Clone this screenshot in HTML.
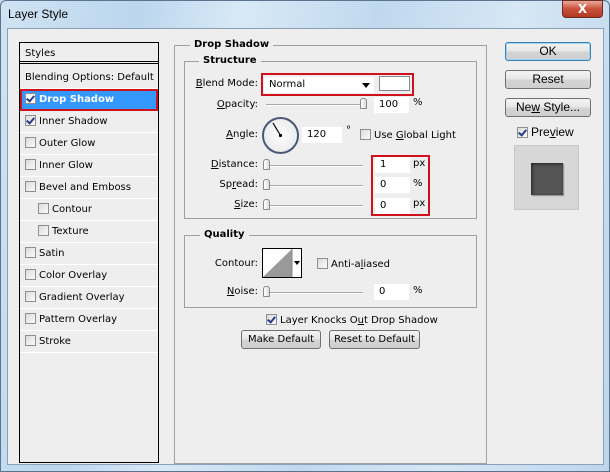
<!DOCTYPE html>
<html><head><meta charset="utf-8"><style>
*{box-sizing:border-box;margin:0;padding:0}
body{width:610px;height:472px;overflow:hidden;font-family:Tahoma,"DejaVu Sans","Liberation Sans",sans-serif;font-size:10px;color:#000;position:relative;background:#c4dcef}
.a{position:absolute}
.frame{left:0;top:0;width:610px;height:472px;background:linear-gradient(100deg,#cfe3f3 0%,#bcd6ee 20%,#d8e9f6 35%,#c0d8ee 55%,#d6e7f5 75%,#bed6ec 100%);border:1px solid #5b7590;border-radius:6px 6px 0 0}
.content{left:7px;top:28px;width:597px;height:437px;background:#eeeeee;border:1px solid #8aa0b4}
.title{left:8px;top:7px;font-family:"Liberation Sans",sans-serif;font-size:12px;color:#000}
.close{left:562px;top:0;width:41px;height:18px;border-radius:0 0 4px 4px;background:linear-gradient(#e9a99a,#c9503a 50%,#b23a22);border:1px solid #6f2a1e;color:#fff;font-weight:bold;font-size:12px;text-align:center;line-height:16px}
.list{left:19px;top:42px;width:140px;height:421px;border:1px solid #000;background:#eeeeee}
.row{position:absolute;left:0;width:138px;height:22px;border-bottom:1px solid #fff;line-height:21px;padding-left:5px;font-size:10px;white-space:nowrap}
.cb{display:inline-block;width:11px;height:11px;border:1px solid #8f8f8f;background:linear-gradient(135deg,#dcdcdc,#fafafa);vertical-align:-2px;margin-right:3px;position:relative}
.cb.on::after{content:"";position:absolute;left:2px;top:0px;width:3px;height:6px;border:solid #2a3d8c;border-width:0 2px 2px 0;transform:rotate(40deg)}
.grp{border:1px solid #a0a0a0}
.lg{position:absolute;background:#eeeeee;font-weight:bold;font-size:10px;padding:0 4px}
.lbl{position:absolute;text-align:right;font-size:10px}
.in{position:absolute;background:#fff;height:16px;font-size:10px;line-height:16px;padding-left:5px}
.track{position:absolute;height:2px;border-top:1px solid #a8a8a8;border-bottom:1px solid #fff}
.thumb{position:absolute;width:7px;height:11px;border:1px solid #888;border-radius:3px 3px 1px 1px;background:linear-gradient(90deg,#fff,#ddd)}
.red{position:absolute;border:2px solid #d0101c}
.btn{position:absolute;height:19px;border:1px solid #707070;border-radius:3px;background:linear-gradient(#f4f4f4 0%,#e6e6e6 50%,#d4d4d4 51%,#cfcfcf 100%);text-align:center;line-height:17px;font-size:12px;font-family:"Liberation Sans",sans-serif}
.sbtn{font-size:10px;font-family:Tahoma,"DejaVu Sans",sans-serif}
u{text-decoration:underline}
</style></head><body>
<div class="a frame"></div>
<div class="a title">Layer Style</div>
<div class="a close">X</div>
<div class="a content"></div>

<div class="a list">
  <div class="row" style="top:0;height:21px;border-bottom:3px double #000">Styles</div>
  <div class="row" style="top:24px">Blending Options: Default</div>
  <div class="row" style="top:46px;background:#3399ff;color:#fff;font-weight:bold;border:2px solid #d0101c;padding-left:3px;line-height:18px"><span class="cb on" style="background:#fff"></span>Drop Shadow</div>
  <div class="row" style="top:68px"><span class="cb on"></span>Inner Shadow</div>
  <div class="row" style="top:90px"><span class="cb"></span>Outer Glow</div>
  <div class="row" style="top:112px"><span class="cb"></span>Inner Glow</div>
  <div class="row" style="top:134px"><span class="cb"></span>Bevel and Emboss</div>
  <div class="row" style="top:156px;padding-left:18px"><span class="cb"></span>Contour</div>
  <div class="row" style="top:178px;padding-left:18px"><span class="cb"></span>Texture</div>
  <div class="row" style="top:200px"><span class="cb"></span>Satin</div>
  <div class="row" style="top:222px"><span class="cb"></span>Color Overlay</div>
  <div class="row" style="top:244px"><span class="cb"></span>Gradient Overlay</div>
  <div class="row" style="top:266px"><span class="cb"></span>Pattern Overlay</div>
  <div class="row" style="top:288px"><span class="cb"></span>Stroke</div>
</div>

<div class="a grp" style="left:174px;top:45px;width:313px;height:419px"></div>
<div class="lg" style="left:190px;top:39px">Drop Shadow</div>
<div class="a grp" style="left:184px;top:61px;width:293px;height:158px"></div>
<div class="lg" style="left:199px;top:55px">Structure</div>

<div class="lbl" style="left:190px;top:78px;width:68px"><u>B</u>lend Mode:</div>
<div class="in" style="left:264px;top:77px;width:110px">Normal<span style="position:absolute;right:4px;top:6px;border:4px solid transparent;border-top:5px solid #000;border-bottom:0"></span></div>
<div class="a" style="left:379px;top:76px;width:31px;height:15px;border:1px solid #888;background:#fff"></div>
<div class="red" style="left:261px;top:73px;width:153px;height:23px"></div>

<div class="lbl" style="left:190px;top:99px;width:68px"><u>O</u>pacity:</div>
<div class="track" style="left:266px;top:104px;width:100px"></div>
<div class="thumb" style="left:360px;top:98px"></div>
<div class="in" style="left:374px;top:97px;width:35px">100</div>
<div class="a" style="left:413px;top:97px">%</div>

<div class="lbl" style="left:190px;top:129px;width:68px"><u>A</u>ngle:</div>
<div class="a" style="left:262px;top:117px;width:37px;height:37px;border-radius:50%;border:2px solid #4a5678;background:radial-gradient(#fff,#e4e4e4)"></div>
<svg class="a" style="left:262px;top:117px" width="37" height="37"><line x1="18.5" y1="18.5" x2="11" y2="6" stroke="#000" stroke-width="1.2"/><circle cx="18.5" cy="18.5" r="1.6"/></svg>
<div class="in" style="left:302px;top:127px;width:40px">120</div>
<div class="a" style="left:346px;top:125px">°</div>
<div class="a" style="left:360px;top:129px"><span class="cb"></span>Use <u>G</u>lobal Light</div>

<div class="lbl" style="left:190px;top:159px;width:68px"><u>D</u>istance:</div>
<div class="track" style="left:266px;top:165px;width:97px"></div>
<div class="thumb" style="left:263px;top:159px"></div>
<div class="in" style="left:375px;top:157px;width:35px">1</div>
<div class="a" style="left:413px;top:158px">px</div>
<div class="lbl" style="left:190px;top:179px;width:68px">Sp<u>r</u>ead:</div>
<div class="track" style="left:266px;top:185px;width:97px"></div>
<div class="thumb" style="left:263px;top:179px"></div>
<div class="in" style="left:375px;top:177px;width:35px">0</div>
<div class="a" style="left:413px;top:178px">%</div>
<div class="lbl" style="left:190px;top:199px;width:68px"><u>S</u>ize:</div>
<div class="track" style="left:266px;top:205px;width:97px"></div>
<div class="thumb" style="left:263px;top:199px"></div>
<div class="in" style="left:375px;top:198px;width:35px">0</div>
<div class="a" style="left:413px;top:198px">px</div>
<div class="red" style="left:371px;top:155px;width:59px;height:61px"></div>

<div class="a grp" style="left:184px;top:235px;width:293px;height:73px"></div>
<div class="lg" style="left:200px;top:229px">Quality</div>
<div class="lbl" style="left:190px;top:258px;width:68px">Contour:</div>
<div class="a" style="left:262px;top:248px;width:40px;height:30px;border:1px solid #000;background:#fff"></div>
<svg class="a" style="left:263px;top:249px" width="38" height="28"><polygon points="0,28 29,0 29,28" fill="#999"/><line x1="29" y1="0" x2="29" y2="28" stroke="#888"/><polygon points="31,12 37,12 34,16" fill="#000"/></svg>
<div class="a" style="left:317px;top:258px"><span class="cb"></span>Anti-a<u>l</u>iased</div>
<div class="lbl" style="left:190px;top:286px;width:68px"><u>N</u>oise:</div>
<div class="track" style="left:266px;top:292px;width:97px"></div>
<div class="thumb" style="left:263px;top:286px"></div>
<div class="in" style="left:374px;top:284px;width:35px">0</div>
<div class="a" style="left:413px;top:285px">%</div>

<div class="a" style="left:266px;top:314px"><span class="cb on"></span>Layer Knocks O<u>u</u>t Drop Shadow</div>
<div class="btn sbtn" style="left:241px;top:330px;width:80px">Make Default</div>
<div class="btn sbtn" style="left:329px;top:330px;width:91px">Reset to Default</div>

<div class="btn" style="left:505px;top:42px;width:86px;border-color:#3c7fb1;box-shadow:inset 0 0 0 1px #9fd3f3">OK</div>
<div class="btn" style="left:505px;top:70px;width:86px">Reset</div>
<div class="btn" style="left:505px;top:98px;width:86px">Ne<u>w</u> Style...</div>
<div class="a" style="left:517px;top:125px;font-size:12px;font-family:'Liberation Sans',sans-serif"><span class="cb on"></span>Pre<u>v</u>iew</div>
<div class="a" style="left:514px;top:145px;width:65px;height:65px;border:1px solid #c8c8c8;background:#d7d7d7"></div>
<div class="a" style="left:531px;top:163px;width:32px;height:32px;background:#555;box-shadow:inset 1px 1px 3px #222,1px 1px 1px #888"></div>
</body></html>
